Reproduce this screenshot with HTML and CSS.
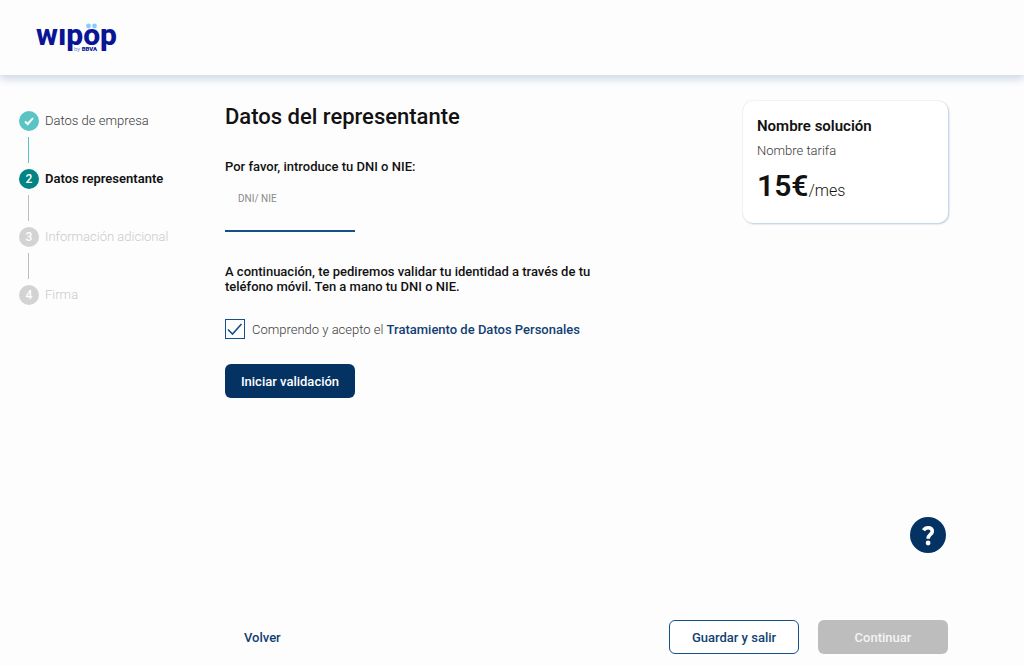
FILE: index.html
```html
<!DOCTYPE html>
<html lang="es">
<head>
  <meta charset="UTF-8">
  <meta name="viewport" content="width=device-width, initial-scale=1">
  <title>Datos del representante</title>
  <link rel="stylesheet" href="styles.css">
</head>
<body>

  <header class="cabecera">
    <svg class="logo" viewBox="0 0 86 32" role="img" aria-label="wipöp by BBVA">
      <text class="logo-nombre" x="0" y="23">wıpop</text>
      <circle cx="52.5" cy="4" r="2.4"/>
      <circle cx="58.5" cy="4" r="2.4"/>
      <text class="logo-by" x="38" y="29">by <tspan class="logo-bbva">BBVA</tspan></text>
    </svg>
  </header>

  <div class="contenido">
    <nav class="pasos">
      <ol>
        <li class="paso hecho">
          <span class="numero">
            <svg viewBox="0 0 20 20" aria-hidden="true"><path d="M6 10.5 L8.7 13 L14 7.2"/></svg>
          </span>
          <span>Datos de empresa</span>
        </li>
        <li class="paso actual"><span class="numero">2</span><span>Datos representante</span></li>
        <li class="paso"><span class="numero">3</span><span>Información adicional</span></li>
        <li class="paso"><span class="numero">4</span><span>Firma</span></li>
      </ol>
    </nav>

    <main class="formulario">
      <h1>Datos del representante</h1>
      <p class="intro">Por favor, introduce tu DNI o NIE:</p>

      <div class="campo">
        <label for="dni">DNI/ NIE</label>
        <input type="text" id="dni">
      </div>

      <p class="aviso">A continuación, te pediremos validar tu identidad a través de tu teléfono móvil. Ten a mano tu DNI o NIE.</p>

      <div class="acepto">
        <span class="casilla">
          <input type="checkbox" id="acepto" checked>
          <svg viewBox="0 0 20 20" aria-hidden="true"><path d="M3 10.5 L7.5 15 L16.5 5"/></svg>
        </span>
        <label for="acepto">Comprendo y acepto el <a href="#">Tratamiento de Datos Personales</a></label>
      </div>

      <button type="button" class="boton principal">Iniciar validación</button>
    </main>

    <aside class="tarifa">
      <h2>Nombre solución</h2>
      <p class="nombre">Nombre tarifa</p>
      <p class="precio"><strong>15€</strong>/mes</p>
    </aside>
  </div>

  <button type="button" class="ayuda" aria-label="Ayuda">
    <svg viewBox="0 0 36 36" aria-hidden="true">
      <path d="M13.5 13.2 C14.6 11.4 16.2 10.7 18.2 10.7 C20.7 10.7 22.3 12.2 22.3 14.2 C22.3 17.6 18.1 17.3 18.1 21.7"/>
      <circle cx="18.1" cy="26" r="2.4"/>
    </svg>
  </button>

  <footer class="pie">
    <a href="#" class="volver">Volver</a>
    <button type="button" class="boton secundario">Guardar y salir</button>
    <button type="button" class="boton" disabled>Continuar</button>
  </footer>

</body>
</html>
```
FILE: styles.css
```css
* {
  box-sizing: border-box;
}

body {
  margin: 0;
  min-height: 100vh;
  display: flex;
  flex-direction: column;
  background-color: #fdfdfd;
  color: #121212;
  font-family: Roboto, "Liberation Sans", sans-serif;
  font-size: 13px;
  line-height: 15px;
}

h1, h2, p, ol {
  margin: 0;
  padding: 0;
}

a {
  color: #123f73;
  font-weight: 500;
  text-decoration: none;
}

/* Cabecera */
.cabecera {
  padding: 22px 36px 21px;
  box-shadow: 0 4px 8px #cdd8e3;
}

.logo {
  display: block;
  width: 86px;
  height: 32px;
  overflow: visible;
  fill: #88ccff;
}

.logo-nombre {
  font-size: 30px;
  font-weight: 800;
  fill: #0a1596;
}

.logo-by {
  font-size: 6px;
  fill: #7c86c8;
}

.logo-bbva {
  font-weight: 900;
  fill: #0a1596;
}

.contenido {
  flex: 1;
  display: flex;
  align-items: flex-start;
  padding: 26px 76px 0 19px;
}

/* Pasos */
.pasos {
  width: 206px;
  padding-top: 10px;
}

.pasos ol {
  list-style: none;
}

.paso {
  display: flex;
  flex-wrap: wrap;
  align-items: center;
  column-gap: 6px;
  color: #cacaca;
  font-weight: 300;
  line-height: 20px;
}

.paso:not(:last-child)::after {
  content: "";
  width: 1px;
  height: 26px;
  margin: 6px 100px 6px 9px;
  background-color: #bdbdbd;
}

.numero {
  width: 20px;
  height: 20px;
  border-radius: 50%;
  background-color: #d3d3d3;
  color: #fff;
  font-size: 12px;
  font-weight: 500;
  text-align: center;
}

.numero svg {
  display: block;
  fill: none;
  stroke: #fff;
  stroke-width: 2;
}

.hecho {
  color: #3a3a3a;
}

.hecho .numero,
.paso.hecho::after {
  background-color: #5ac4c4;
}

.actual {
  color: #121212;
  font-weight: 600;
}

.actual .numero {
  background-color: #028484;
}

/* Formulario */
.formulario {
  flex: 1;
}

h1 {
  padding-top: 2px;
  font-size: 22px;
  font-weight: 500;
  line-height: 28px;
}

.intro,
.aviso {
  max-width: 370px;
  font-weight: 500;
}

.intro {
  margin-top: 28px;
}

.campo {
  width: 130px;
  height: 48px;
  margin-top: 10px;
  padding: 9px 13px 0;
  border-bottom: 2px solid #14508c;
}

.campo label {
  display: block;
  color: #8a8a8a;
  font-size: 10px;
  line-height: 12px;
}

.campo input {
  display: block;
  width: 100%;
  height: 24px;
  padding: 0;
  border: 0;
  outline: 0;
  background: none;
  font: inherit;
}

.aviso {
  margin-top: 32px;
}

.acepto {
  display: flex;
  align-items: center;
  gap: 7px;
  margin-top: 25px;
  color: #3a3a3a;
  font-weight: 300;
}

.casilla {
  display: grid;
  width: 20px;
  height: 20px;
}

.casilla input,
.casilla svg {
  grid-area: 1 / 1;
  width: 20px;
  height: 20px;
  margin: 0;
}

.casilla input {
  appearance: none;
  border: 1px solid #14508c;
}

.casilla svg {
  visibility: hidden;
  fill: none;
  stroke: #14508c;
  stroke-width: 1.6;
  pointer-events: none;
}

.casilla input:checked + svg {
  visibility: visible;
}

.boton {
  width: 130px;
  height: 34px;
  padding: 0;
  border: 0;
  border-radius: 6px;
  background-color: #bdbdbd;
  color: #f4f4f4;
  font: inherit;
  font-weight: 500;
}

.principal {
  margin-top: 25px;
  background-color: #043263;
  color: #fff;
}

.secundario {
  border: 1px solid #14508c;
  background-color: #fff;
  color: #123f73;
}

/* Tarifa */
.tarifa {
  width: 205px;
  padding: 16px 14px 14px;
  border-radius: 10px;
  background-color: #fff;
  box-shadow: 0 0 2px #d3dce6, 1px 1px 2px #b4c8dc;
}

.tarifa h2 {
  font-size: 15px;
  font-weight: 600;
  line-height: 18px;
}

.nombre {
  margin-top: 8px;
  color: #3a3a3a;
  font-weight: 300;
}

.precio {
  margin-top: 10px;
  font-size: 16px;
  font-weight: 300;
  line-height: 36px;
}

.precio strong {
  font-size: 30px;
  font-weight: 600;
}

/* Ayuda */
.ayuda {
  align-self: flex-end;
  width: 36px;
  height: 36px;
  margin-right: 78px;
  padding: 0;
  border: 0;
  border-radius: 50%;
  background-color: #043263;
}

.ayuda svg {
  display: block;
  fill: none;
  stroke: #fff;
  stroke-width: 3.6;
}

.ayuda circle {
  fill: #fff;
  stroke: none;
}

/* Pie */
.pie {
  display: flex;
  align-items: center;
  gap: 19px;
  padding: 67px 76px 12px 244px;
}

.volver {
  margin-right: auto;
}
```
